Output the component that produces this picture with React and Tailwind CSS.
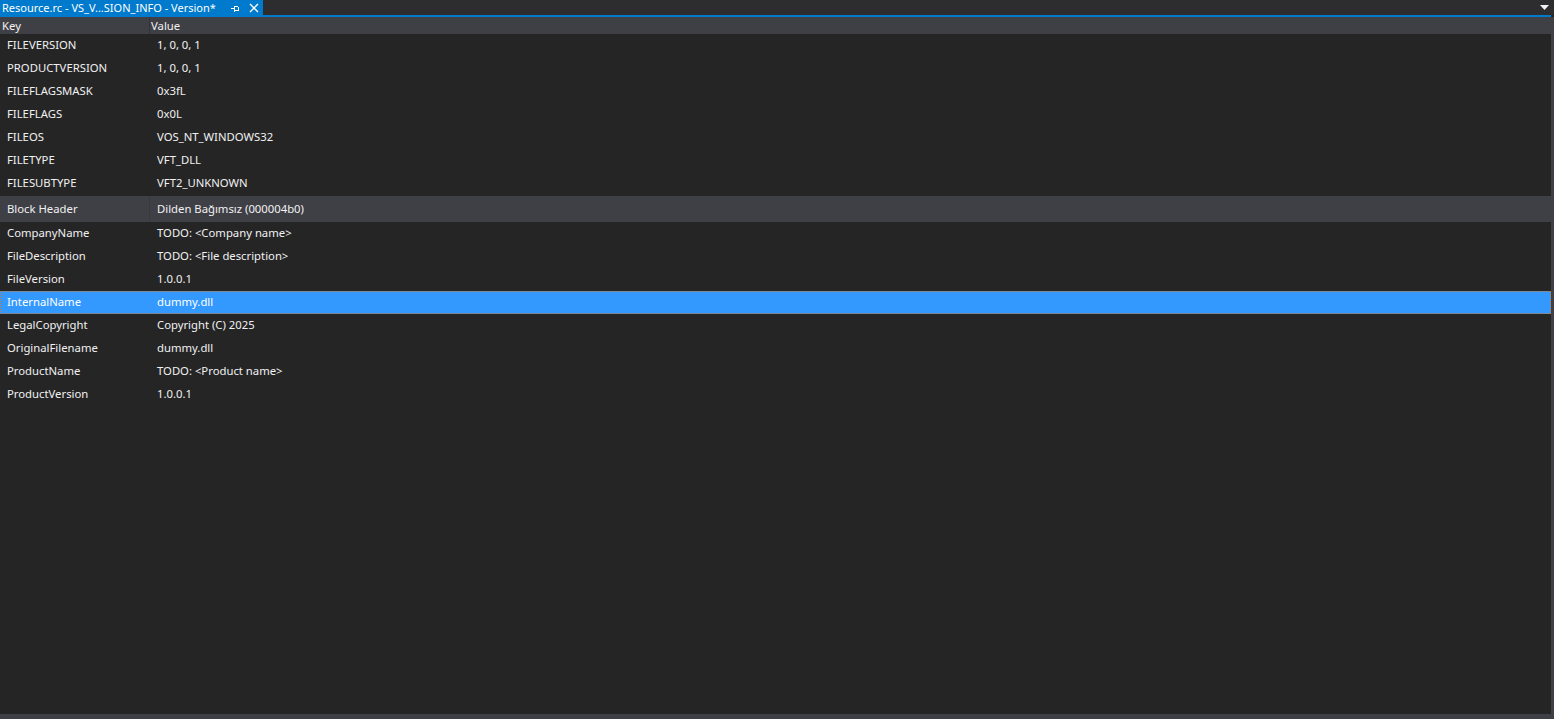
import React from 'react';

const fixedRows = [
  ['FILEVERSION', '1, 0, 0, 1'],
  ['PRODUCTVERSION', '1, 0, 0, 1'],
  ['FILEFLAGSMASK', '0x3fL'],
  ['FILEFLAGS', '0x0L'],
  ['FILEOS', 'VOS_NT_WINDOWS32'],
  ['FILETYPE', 'VFT_DLL'],
  ['FILESUBTYPE', 'VFT2_UNKNOWN'],
];

const blockRows = [
  ['CompanyName', 'TODO: <Company name>'],
  ['FileDescription', 'TODO: <File description>'],
  ['FileVersion', '1.0.0.1'],
  ['InternalName', 'dummy.dll'],
  ['LegalCopyright', 'Copyright (C) 2025'],
  ['OriginalFilename', 'dummy.dll'],
  ['ProductName', 'TODO: <Product name>'],
  ['ProductVersion', '1.0.0.1'],
];

const Row = ({ k, v, selected }) => (
  <div
    className={`flex h-[23px] items-center pb-[2px] ${
      selected ? 'bg-[#3399ff] text-white outline-1 outline-dotted outline-[#c87a2a] -outline-offset-1' : ''
    }`}
  >
    <div className="w-[150px] pl-[7px] shrink-0">{k}</div>
    <div className="pl-[7px]">{v}</div>
  </div>
);

export default function App() {
  return (
    <div
      className="w-[1554px] h-[719px] bg-[#252526] text-[#f1f1f1] text-[11.3px] leading-none flex flex-col overflow-hidden"
      style={{ fontFamily: '"Noto Sans", "Open Sans", sans-serif' }}
    >
      {/* tab strip */}
      <div className="h-[15px] bg-[#2d2d30] flex items-stretch shrink-0">
        <div className="w-[263px] shrink-0 bg-[#007acc] text-white flex items-center pl-[2px] overflow-hidden">
          <span className="whitespace-nowrap -mt-[1px] text-[11px]">Resource.rc - VS_V...SION_INFO - Version*</span>
          <div className="flex-1" />
          <svg width="10" height="10" viewBox="0 0 10 10" className="shrink-0 mr-[9px]">
            <path d="M1 5.5h3M4 2.5v6M4 3.5h4M4 7.5h4M8 3.5v4" stroke="white" strokeWidth="1" fill="none" shapeRendering="crispEdges" />
          </svg>
          <svg width="10" height="10" viewBox="0 0 10 10" className="shrink-0 mr-[4px]">
            <path d="M1 1L9 9M9 1L1 9" stroke="white" strokeWidth="1.4" />
          </svg>
        </div>
        <div className="flex-1" />
        <div className="w-[20px] flex items-center justify-center">
          <svg width="9" height="5" viewBox="0 0 9 5">
            <path d="M0 0h9L4.5 5z" fill="#f1f1f1" />
          </svg>
        </div>
      </div>
      <div className="h-[2px] bg-[#007acc] w-[1551px] shrink-0" />

      <div className="flex flex-1 min-h-0">
        <div className="w-[1551px] flex flex-col">
          {/* header */}
          <div className="h-[17px] bg-[#3f3f46] flex items-center shrink-0">
            <div className="w-[150px] pl-[2px] border-r border-[#333337] h-full flex items-center">Key</div>
            <div className="pl-[1px]">Value</div>
          </div>
          {fixedRows.map(([k, v]) => (
            <Row key={k} k={k} v={v} />
          ))}
          <div className="h-[1px]" />
          <div className="h-[26px] bg-[#3f3f46] flex items-center">
            <div className="w-[150px] pl-[7px] h-full flex items-center border-r border-[#38383e]">Block Header</div>
            <div className="pl-[7px]">Dilden Bağımsız (000004b0)</div>
          </div>
          {blockRows.map(([k, v]) => (
            <Row key={k} k={k} v={v} selected={k === 'InternalName'} />
          ))}
          <div className="flex-1" />
          <div className="h-[5px] bg-[#3f3f46]" />
        </div>
        <div className="w-[3px] bg-[#3f3f46]" />
      </div>
    </div>
  );
}
